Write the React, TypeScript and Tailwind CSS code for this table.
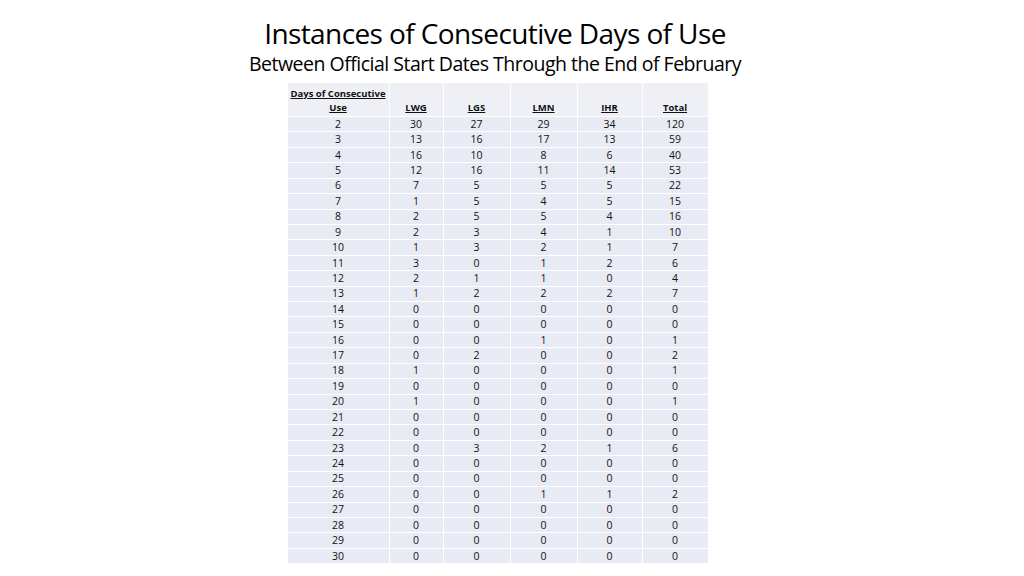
import React from "react";

const rows: number[][] = [
  [2, 30, 27, 29, 34, 120],
  [3, 13, 16, 17, 13, 59],
  [4, 16, 10, 8, 6, 40],
  [5, 12, 16, 11, 14, 53],
  [6, 7, 5, 5, 5, 22],
  [7, 1, 5, 4, 5, 15],
  [8, 2, 5, 5, 4, 16],
  [9, 2, 3, 4, 1, 10],
  [10, 1, 3, 2, 1, 7],
  [11, 3, 0, 1, 2, 6],
  [12, 2, 1, 1, 0, 4],
  [13, 1, 2, 2, 2, 7],
  [14, 0, 0, 0, 0, 0],
  [15, 0, 0, 0, 0, 0],
  [16, 0, 0, 1, 0, 1],
  [17, 0, 2, 0, 0, 2],
  [18, 1, 0, 0, 0, 1],
  [19, 0, 0, 0, 0, 0],
  [20, 1, 0, 0, 0, 1],
  [21, 0, 0, 0, 0, 0],
  [22, 0, 0, 0, 0, 0],
  [23, 0, 3, 2, 1, 6],
  [24, 0, 0, 0, 0, 0],
  [25, 0, 0, 0, 0, 0],
  [26, 0, 0, 1, 1, 2],
  [27, 0, 0, 0, 0, 0],
  [28, 0, 0, 0, 0, 0],
  [29, 0, 0, 0, 0, 0],
  [30, 0, 0, 0, 0, 0],
];

const headers = ["LWG", "LGS", "LMN", "IHR", "Total"];

export default function App() {
  return (
    <div
      className="w-[1024px] h-[576px] bg-white flex flex-col items-center pr-[34px] text-black overflow-hidden"
      style={{ fontFamily: '"Open Sans", "Noto Sans", sans-serif' }}
    >
      {/* Title */}
      <h1 className="mt-[16px] text-[28px] leading-[34px] tracking-[-0.6px]">
        Instances of Consecutive Days of Use
      </h1>
      <h2 className="mt-[3px] text-[19.5px] leading-[22px] tracking-[-0.5px]">
        Between Official Start Dates Through the End of February
      </h2>

      {/* Table */}
      <table className="mt-[7px] ml-[5px] border-collapse text-[10.5px] text-[#111]">
        <colgroup>
          <col className="w-[102px]" />
          <col className="w-[54px]" />
          <col className="w-[67px]" />
          <col className="w-[67px]" />
          <col className="w-[65px]" />
          <col className="w-[66px]" />
        </colgroup>
        <thead>
          <tr className="h-[34px] bg-[#eff0f6]">
            <th className="border border-white align-bottom font-bold text-[9.5px] leading-[14px] pb-[1px]">
              <span className="underline">Days of Consecutive</span>
              <br />
              <span className="underline">Use</span>
            </th>
            {headers.map((h) => (
              <th
                key={h}
                className="border border-white align-bottom font-bold text-[9.5px] leading-[14px] pb-[1px]"
              >
                <span className="underline">{h}</span>
              </th>
            ))}
          </tr>
        </thead>
        <tbody>
          {rows.map((r) => (
            <tr key={r[0]} className="h-[15.43px] bg-[#e8ebf4]">
              {r.map((v, i) => (
                <td
                  key={i}
                  className="border border-white text-center leading-[13px] p-0"
                >
                  {v}
                </td>
              ))}
            </tr>
          ))}
        </tbody>
      </table>
    </div>
  );
}
